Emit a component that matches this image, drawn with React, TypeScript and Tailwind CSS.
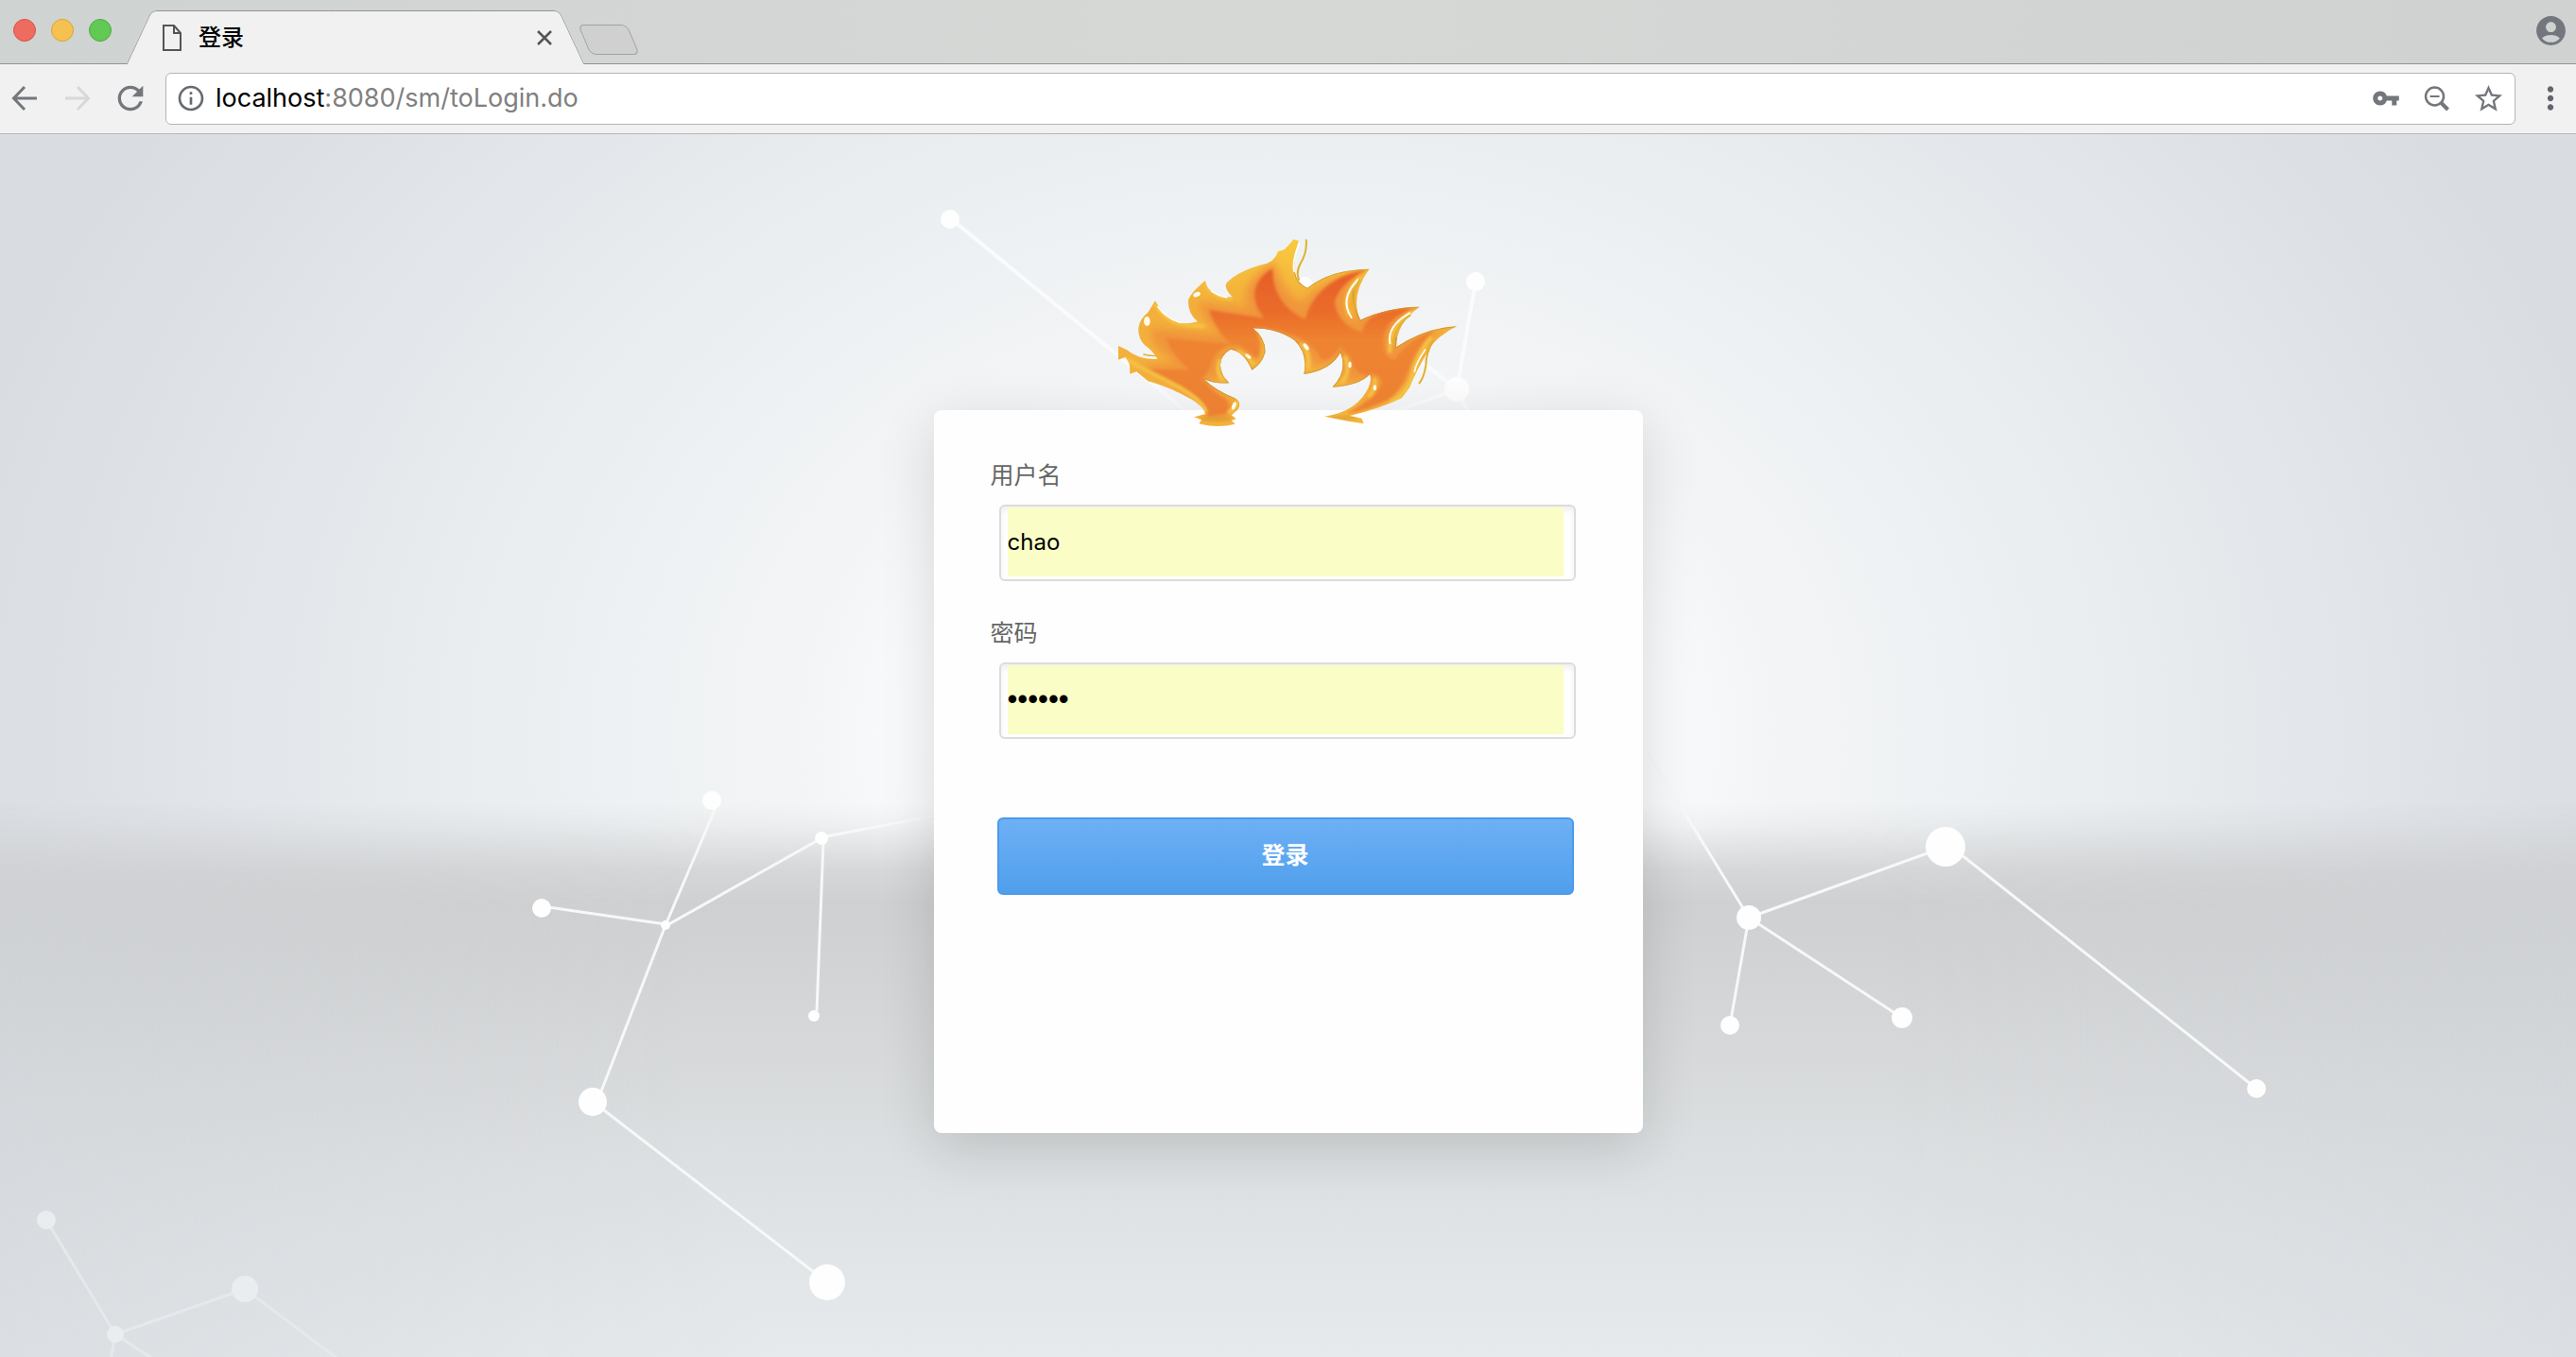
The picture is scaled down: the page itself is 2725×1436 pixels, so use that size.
import { useState } from "react";
import type { ReactNode } from "react";
import {
  MdAccountCircle,
  MdInfoOutline,
  MdMoreVert,
  MdRefresh,
  MdStarBorder,
  MdVpnKey,
} from "react-icons/md";

type Dot = [x: number, y: number, r: number];
type Line = [x1: number, y1: number, x2: number, y2: number];

const dots: Dot[] = [
  [753, 847, 10], [573, 961, 10], [704, 979, 5], [869, 887, 7], [861, 1075, 6],
  [627, 1166, 15], [875, 1357, 19], [1850, 971, 13], [2058, 896, 21],
  [2387, 1152, 10], [2012, 1077, 11], [1830, 1085, 10], [1005, 232, 10],
  [1561, 298, 10], [1541, 412, 13], [1380, 302, 9],
];

const lines: Line[] = [
  [757, 855, 704, 979], [573, 959, 704, 978], [704, 980, 869, 887],
  [869, 886, 1010, 859], [871, 890, 864, 1070], [704, 979, 634, 1160],
  [630, 1168, 875, 1357], [1742, 795, 1850, 971], [1850, 971, 2058, 896],
  [1850, 971, 2012, 1077], [1850, 971, 1830, 1085], [2064, 896, 2387, 1152],
];

const faintLines: Line[] = [
  [1009, 234, 1270, 448], [1561, 298, 1541, 412], [1541, 412, 1440, 448],
  [1541, 412, 1500, 380], [1541, 412, 1560, 448],
];

const cornerDots: Dot[] = [[49, 1291, 10], [122, 1412, 9], [259, 1364, 14]];

const cornerLines: Line[] = [
  [49, 1291, 122, 1412], [122, 1412, 259, 1364], [259, 1364, 360, 1440],
  [122, 1412, 117, 1440], [122, 1412, 168, 1442],
];

const drawLines = (items: Line[]) =>
  items.map(([x1, y1, x2, y2]) => (
    <line key={`${x1}-${y1}-${x2}-${y2}`} x1={x1} y1={y1} x2={x2} y2={y2} />
  ));

const drawDots = (items: Dot[]) =>
  items.map(([cx, cy, r]) => <circle key={`${cx}-${cy}`} cx={cx} cy={cy} r={r} />);

function Backdrop() {
  return (
    <svg
      className="absolute inset-0 h-full w-full"
      viewBox="0 142 2725 1294"
      preserveAspectRatio="xMidYMid slice"
      aria-hidden="true"
    >
      <defs>
        <radialGradient id="wall" gradientUnits="userSpaceOnUse" cx="1362" cy="780" r="1440" gradientTransform="translate(0 156) scale(1 .8)">
          <stop offset="0" stopColor="#ffffff" />
          <stop offset=".26" stopColor="#fafbfc" />
          <stop offset=".37" stopColor="#f3f4f5" />
          <stop offset=".5" stopColor="#edf1f3" />
          <stop offset=".68" stopColor="#e6eaed" />
          <stop offset=".8" stopColor="#e1e4e9" />
          <stop offset="1" stopColor="#d9dce1" />
        </radialGradient>
        <linearGradient id="floor" x1="0" y1="0" x2="0" y2="1">
          <stop offset="0" stopColor="#cfd0d1" stopOpacity="0" />
          <stop offset=".04" stopColor="#cfd0d1" stopOpacity=".18" />
          <stop offset=".12" stopColor="#cfd0d1" stopOpacity=".8" />
          <stop offset=".18" stopColor="#cfd0d1" />
          <stop offset=".35" stopColor="#d3d5d6" />
          <stop offset=".65" stopColor="#dde0e2" />
          <stop offset="1" stopColor="#e6eaec" />
        </linearGradient>
        <radialGradient id="edge" gradientUnits="userSpaceOnUse" cx="1362" cy="1100" r="1420">
          <stop offset=".45" stopColor="#cdd1d6" stopOpacity="0" />
          <stop offset="1" stopColor="#cfd3d9" stopOpacity=".5" />
        </radialGradient>
        <linearGradient id="edge-fade" x1="0" y1="0" x2="0" y2="1">
          <stop offset="0" stopColor="#000" />
          <stop offset=".2" stopColor="#fff" />
        </linearGradient>
        <mask id="edge-mask">
          <rect y="850" width="2725" height="586" fill="url(#edge-fade)" />
        </mask>
      </defs>
      <rect y="142" width="2725" height="1294" fill="url(#wall)" />
      <rect y="850" width="2725" height="586" fill="url(#floor)" />
      <rect y="850" width="2725" height="586" fill="url(#edge)" mask="url(#edge-mask)" />
      <g stroke="#f6f8f9" strokeWidth="3">{drawLines(lines)}</g>
      <g stroke="#fafbfc" strokeWidth="4">{drawLines(faintLines)}</g>
      <g fill="#fefefe">{drawDots(dots)}</g>
      <g stroke="#e5e9ec" strokeWidth="3">{drawLines(cornerLines)}</g>
      <g fill="#e9edf0">{drawDots(cornerDots)}</g>
    </svg>
  );
}

function FlameLogo() {
  return (
    <svg className="relative z-10 mr-1 h-[230px] w-[400px]" viewBox="0 0 1200 690" role="img" aria-label="logo">
      <defs>
        <linearGradient id="gold" x1="0" y1="0" x2="0" y2="1">
          <stop offset="0" stopColor="#f8cb3f" />
          <stop offset=".35" stopColor="#f3ae3b" />
          <stop offset="1" stopColor="#f4b53c" />
        </linearGradient>
        <linearGradient id="ember" gradientUnits="userSpaceOnUse" x1="0" y1="160" x2="0" y2="630">
          <stop offset="0" stopColor="#e65c27" />
          <stop offset=".3" stopColor="#ea6c2a" />
          <stop offset=".5" stopColor="#ee8430" />
          <stop offset="1" stopColor="#ec7f30" />
        </linearGradient>
        <filter id="soft" x="-10%" y="-10%" width="120%" height="120%">
          <feGaussianBlur stdDeviation="4" />
        </filter>
        <filter id="glow" x="-10%" y="-10%" width="120%" height="120%">
          <feGaussianBlur stdDeviation="12" />
        </filter>
        <clipPath id="flame-shape">
          <path id="flame-outline" d="M66 408 L92 420 Q130 452 190 450 Q176 424 150 406 Q128 385 130 350 Q134 322 160 302 L183 265 Q205 310 252 333 Q285 342 318 331 Q286 306 288 262 Q298 236 342 201 Q345 228 370 240 Q398 256 428 253 Q399 224 410 208 Q445 172 520 151 Q562 144 573 108 L592 103 Q606 90 622 70 L638 74 Q620 140 626 172 Q632 210 666 224 Q740 165 862 164 Q800 250 834 326 Q920 285 1022 284 Q948 335 948 412 Q1040 350 1140 346 Q1070 380 1046 430 Q1010 490 990 540 L966 573 Q900 606 800 630 L838 638 L845 655 L800 648 L720 632 Q800 620 840 572 Q876 525 864 498 Q830 535 745 539 Q795 490 771 428 Q742 485 655 498 Q668 430 625 390 Q570 352 493 352 Q535 385 532 430 Q522 465 490 485 Q465 425 422 419 Q370 450 402 508 L418 526 Q375 530 338 514 Q375 550 432 572 Q464 588 440 615 L425 628 L440 640 L425 645 L437 656 Q380 670 322 655 L330 643 L306 634 L342 625 Q342 605 300 578 Q220 535 160 520 L124 490 L102 497 Q106 460 88 444 L66 452 Z" />
        </clipPath>
      </defs>
      <use href="#flame-outline" fill="url(#gold)" />
      <g clipPath="url(#flame-shape)">
        <path
          fill="#f0953a"
          filter="url(#glow)"
          d="M120 470 L260 460 Q160 420 170 350 L400 370 Q330 330 320 270 L480 290 Q440 210 560 140 Q600 260 650 270 Q700 200 850 165 Q770 240 800 330 Q880 290 1000 290 Q930 340 930 410 Q1000 370 1100 352 Q1020 410 990 500 Q960 580 800 620 Q880 570 870 510 Q820 530 780 520 L770 440 Q740 480 680 470 Q660 390 490 350 Q540 400 490 470 L420 415 Q380 450 395 510 L340 515 L440 590 L420 640 L340 640 Q320 570 120 470Z"
        />
        <path
          fill="url(#ember)"
          filter="url(#soft)"
          d="M155 483 L295 484 Q235 440 218 383 L425 402 Q380 370 355 294 L528 320 Q492 275 500 230 Q510 188 555 163 Q556 275 658 324 Q676 262 720 226 Q770 180 858 166 Q770 205 752 270 Q765 345 840 365 Q846 325 886 308 Q940 286 1010 288 Q918 316 908 380 Q904 446 942 454 Q990 384 1068 362 Q1010 410 985 490 Q960 556 920 580 Q860 610 785 625 Q896 572 904 520 Q884 486 860 500 Q812 500 808 450 L770 410 Q740 460 710 450 Q675 385 600 368 Q550 348 495 352 Q526 390 510 450 Q480 425 450 405 Q400 400 370 440 Q350 500 330 510 Q370 560 410 580 Q425 610 400 625 L350 632 Q352 590 300 560 Q240 520 155 483Z"
        />
        <g fill="none" stroke="#b98a2a" strokeOpacity=".6" strokeWidth="5">
          <path d="M626 172 Q632 210 666 224 Q740 165 862 164 M812 210 Q806 290 834 326 Q920 285 1022 284 M948 380 L948 412 Q1040 350 1140 346" />
          <path d="M864 498 Q830 535 745 539 Q795 490 771 428 Q742 485 655 498 Q668 430 625 390 Q570 352 493 352 Q535 385 532 430 Q522 465 490 485 Q465 425 422 419 Q370 450 402 508 L418 526 Q375 530 338 514 Q375 550 432 572 Q464 588 440 615" />
        </g>
        <g fill="none" stroke="#f5c444" strokeWidth="12" filter="url(#soft)">
          <path d="M836 190 Q772 250 800 310 M1004 298 Q922 350 928 430 M1060 380 Q1015 430 1000 500 Q985 560 930 590" />
          <path d="M645 400 Q678 430 668 480 M785 440 Q806 490 775 525 M880 510 Q886 545 860 570 M440 425 Q480 435 496 470 M390 450 Q372 490 400 518 M445 580 Q448 605 415 620" />
          <path d="M90 450 Q180 500 260 540 Q330 580 345 620 M183 275 Q220 350 340 345 M345 215 Q370 255 428 258" />
        </g>
        <g fill="#d89a2e" opacity=".6" filter="url(#soft)">
          <ellipse cx="375" cy="640" rx="50" ry="8" />
          <ellipse cx="780" cy="636" rx="45" ry="6" />
        </g>
      </g>
      <g fill="none" stroke="#fffdf4" strokeLinecap="round">
        <path strokeWidth="6" d="M826 198 Q766 260 806 318 M990 304 Q918 345 928 400" />
        <path strokeWidth="5" d="M640 82 Q616 140 624 172 M192 284 Q215 318 262 334 M362 234 Q385 250 410 254 M1040 420 Q1012 460 1006 490" />
      </g>
      <g fill="none" stroke="#dfb02f" strokeWidth="6">
        <path d="M662 70 Q666 110 645 145 Q628 175 640 200" />
        <path d="M1066 390 Q1042 430 1042 470 Q1036 510 1020 528" />
        <path d="M832 196 Q802 250 822 316" strokeWidth="5" />
        <path d="M994 310 Q936 350 938 410" strokeWidth="5" />
        <path d="M145 435 Q165 440 185 440" strokeWidth="4" />
      </g>
      <g fill="#fffbe8">
        <ellipse cx="157" cy="330" rx="10" ry="15" />
        <ellipse cx="315" cy="245" rx="12" ry="7" transform="rotate(-25 315 245)" />
        <ellipse cx="662" cy="411" rx="6" ry="13" transform="rotate(-35 662 411)" />
        <ellipse cx="801" cy="468" rx="5" ry="10" />
        <ellipse cx="880" cy="541" rx="5" ry="9" />
        <ellipse cx="478" cy="441" rx="5" ry="11" transform="rotate(-50 478 441)" />
        <ellipse cx="433" cy="598" rx="6" ry="13" transform="rotate(20 433 598)" />
      </g>
    </svg>
  );
}

function IconButton({ label, children }: { label: string; children: ReactNode }) {
  return (
    <button type="button" aria-label={label} className="flex size-7 items-center justify-center text-[#73777d]">
      {children}
    </button>
  );
}

function TabStrip() {
  return (
    <div className="flex h-17 shrink-0 items-end border-b border-[#919492] bg-linear-to-r from-[#cfd3d1] via-[#d6d8d6] to-[#cfd2d1]">
      <div className="flex h-full w-[134px] items-center gap-4 pr-4 pb-1 pl-3.5">
        <span className="size-6 rounded-full border border-[#dc5247] bg-[#ee6b60]" />
        <span className="size-6 rounded-full border border-[#dca33c] bg-[#f5c150]" />
        <span className="size-6 rounded-full border border-[#4dab3e] bg-[#62c955]" />
      </div>
      <div className="relative -mb-px h-[57px] w-[484px]">
        <span className="absolute inset-y-0 left-[13px] w-1/2 -skew-x-[25deg] rounded-tl-md border-t border-l border-[#919492] bg-[#f1f1f1]" />
        <span className="absolute inset-y-0 right-[13px] w-1/2 skew-x-[25deg] rounded-tr-md border-t border-r border-[#919492] bg-[#f1f1f1]" />
        <div className="relative flex h-full items-center pr-[34px] pl-[38px]">
          <svg className="h-7 w-5" viewBox="0 0 20 28" fill="none" stroke="#555" strokeWidth="2" aria-hidden="true">
            <path d="M1 1h11l7 8v18H1z" />
            <path d="M12 1v8h7" />
          </svg>
          <span className="ml-[18px] flex-1 text-2xl leading-8 font-medium text-black">登录</span>
          <button type="button" aria-label="关闭标签页" className="text-[#555]">
            <svg className="size-4" viewBox="0 0 16 16" stroke="currentColor" strokeWidth="2.5">
              <path d="M1 1l14 14M15 1L1 15" />
            </svg>
          </button>
        </div>
      </div>
      <button
        type="button"
        aria-label="新标签页"
        className="mb-[9px] h-8 w-[52px] skew-x-[23deg] rounded-md border border-[#a3a3a3] bg-[#d0d0d0]"
      />
      <button type="button" aria-label="用户" className="mr-2 mb-4 ml-auto text-[#73777d]">
        <MdAccountCircle className="size-[37px]" />
      </button>
    </div>
  );
}

function Toolbar() {
  return (
    <div className="flex h-[74px] shrink-0 items-center border-b border-[#b3b6b8] bg-[#f1f1f1] pr-2 pb-px pl-3">
      <nav className="flex gap-7">
        <IconButton label="后退">
          <svg className="size-7" viewBox="0 0 28 28" fill="none" stroke="currentColor" strokeWidth="3">
            <path d="M27 14H3M14 2L2.500 14L14 26" />
          </svg>
        </IconButton>
        <IconButton label="前进">
          <svg className="size-7" viewBox="0 0 28 28" fill="none" stroke="#d8d8d8" strokeWidth="3">
            <path d="M1 14H25M14 2L25.500 14L14 26" />
          </svg>
        </IconButton>
        <IconButton label="重新加载">
          <MdRefresh className="size-10 shrink-0" />
        </IconButton>
      </nav>
      <div className="ml-[23px] flex h-[55px] flex-1 items-center rounded-md border border-[#b3b5b6] bg-white pr-3.5 pl-2.5">
        <MdInfoOutline className="size-8 text-[#666a70]" />
        <div role="textbox" aria-label="地址" className="ml-2.5 flex-1 text-[27px] leading-9 text-[#808080]">
          <span className="text-black">localhost</span>:8080/sm/toLogin.do
        </div>
        <div className="flex items-center gap-[26px]">
          <IconButton label="密码">
            <MdVpnKey className="size-[30px] shrink-0" />
          </IconButton>
          <IconButton label="缩放">
            <svg className="size-7" viewBox="0 0 28 28" fill="none" stroke="currentColor">
              <circle cx="11.500" cy="12" r="9.500" strokeWidth="2.500" />
              <path d="M6.500 12h10" strokeWidth="2" />
              <path d="M18.500 19l7 7" strokeWidth="4" />
            </svg>
          </IconButton>
          <IconButton label="收藏">
            <MdStarBorder className="size-[35px] shrink-0" />
          </IconButton>
        </div>
      </div>
      <button type="button" aria-label="菜单" className="ml-[18px] text-[#62666c]">
        <MdMoreVert className="size-[38px]" />
      </button>
    </div>
  );
}

type FieldProps = {
  id: string;
  label: string;
  type: "text" | "password";
  value: string;
  onChange: (value: string) => void;
};

const inputFont = {
  text: "text-2xl",
  password: "font-['Liberation_Sans',sans-serif] text-[31px]",
};

function Field({ id, label, type, value, onChange }: FieldProps) {
  return (
    <div className="flex flex-col gap-3">
      <label htmlFor={id} className="text-[25px] leading-[38px] text-[#666]">
        {label}
      </label>
      <div className="ml-[9px] flex h-[81px] rounded-md border-2 border-[#dcdcdc] bg-white pt-px pr-[11px] pb-[3px] pl-[7px] shadow-[inset_0_4px_6px_#f0f0f0]">
        <input
          id={id}
          type={type}
          value={value}
          onChange={(event) => onChange(event.target.value)}
          className={`w-full bg-[#fafdc5] text-black outline-none ${inputFont[type]}`}
        />
      </div>
    </div>
  );
}

function LoginForm() {
  const [user, setUser] = useState("chao");
  const [password, setPassword] = useState("secret");
  return (
    <form
      onSubmit={(event) => event.preventDefault()}
      className="relative -mt-[26px] flex min-h-[765px] w-[750px] flex-col gap-9 rounded-lg bg-[#fefefe] pt-[50px] pr-[71px] pb-16 pl-15 shadow-[0_16px_60px_rgba(0,0,0,0.14)]"
    >
      <Field id="user" label="用户名" type="text" value={user} onChange={setUser} />
      <Field id="password" label="密码" type="password" value={password} onChange={setPassword} />
      <button
        type="submit"
        className="mt-[47px] mr-[2px] ml-[7px] h-[82px] rounded-md border-2 border-[#4c9aea] bg-linear-to-b from-[#6db0f5] to-[#509fec] text-[25px] font-bold text-white"
      >
        登录
      </button>
    </form>
  );
}

export default function App() {
  return (
    <div className="flex min-h-screen flex-col font-[Inter,'Noto_Sans_CJK_SC',sans-serif]">
      <TabStrip />
      <Toolbar />
      <main className="relative flex flex-1 flex-col items-center overflow-hidden pt-[88px] pb-16">
        <Backdrop />
        <FlameLogo />
        <LoginForm />
      </main>
    </div>
  );
}
